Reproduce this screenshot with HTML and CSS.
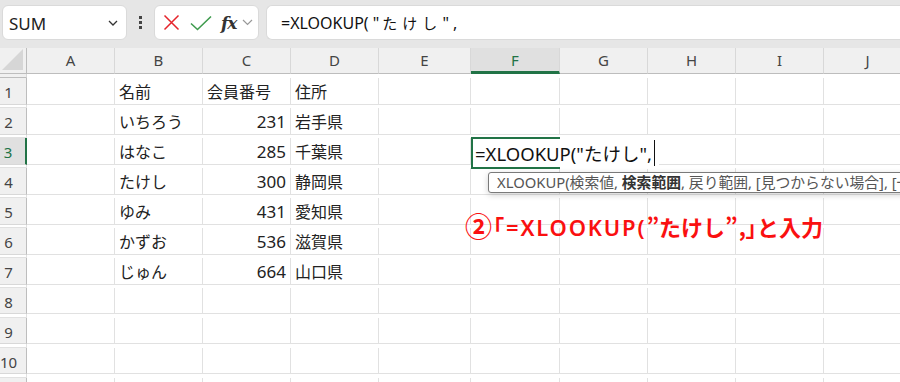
FILE: index.html
```html
<!DOCTYPE html>
<html lang="ja">
<head>
<meta charset="utf-8">
<link rel="stylesheet" href="styles.css">
</head>
<body>
<div class="app">
  <div class="toolbar">
    <div class="namebox">
      <span class="name">SUM</span>
      <svg class="chev" width="10" height="6" viewBox="0 0 10 6"><path d="M1 1 L5 5 L9 1" fill="none" stroke="#333" stroke-width="1.3"/></svg>
    </div>
    <div class="dots"><i></i><i></i><i></i></div>
    <div class="fxbox">
      <svg class="ic" width="17" height="17" viewBox="0 0 17 17"><path d="M1.5 1.5 L15.5 15.5 M15.5 1.5 L1.5 15.5" stroke="#e5242b" stroke-width="1.5" fill="none"/></svg>
      <svg class="ic" width="22" height="16" viewBox="0 0 22 16"><path d="M1 8.5 L7.5 14.5 L21 1.5" stroke="#3f9b4e" stroke-width="1.6" fill="none"/></svg>
      <span class="fx">fx</span>
      <svg class="chev2" width="11" height="7" viewBox="0 0 11 7"><path d="M1 1 L5.5 5.5 L10 1" fill="none" stroke="#999" stroke-width="1.2"/></svg>
    </div>
    <div class="formula">=XLOOKUP( "<span class="kana">たけし</span>" ,</div>
  </div>
  <div class="sheet">
    <div class="row head">
      <div class="rh corner"><span class="tri"></span></div>
      <div class="ch">A</div><div class="ch">B</div><div class="ch">C</div><div class="ch">D</div><div class="ch">E</div><div class="ch sel">F</div><div class="ch">G</div><div class="ch">H</div><div class="ch">I</div><div class="ch">J</div><div class="ch"></div>
    </div>
    <div class="row">
      <div class="rh">1</div><div class="c"></div><div class="c">名前</div><div class="c">会員番号</div><div class="c">住所</div><div class="c"></div><div class="c"></div><div class="c"></div><div class="c"></div><div class="c"></div><div class="c"></div><div class="c"></div>
    </div>
    <div class="row">
      <div class="rh">2</div><div class="c"></div><div class="c">いちろう</div><div class="c num">231</div><div class="c">岩手県</div><div class="c"></div><div class="c"></div><div class="c"></div><div class="c"></div><div class="c"></div><div class="c"></div><div class="c"></div>
    </div>
    <div class="row">
      <div class="rh selr">3</div><div class="c"></div><div class="c">はなこ</div><div class="c num">285</div><div class="c">千葉県</div><div class="c"></div><div class="c"></div><div class="c"></div><div class="c"></div><div class="c"></div><div class="c"></div><div class="c"></div>
    </div>
    <div class="row">
      <div class="rh">4</div><div class="c"></div><div class="c">たけし</div><div class="c num">300</div><div class="c">静岡県</div><div class="c"></div><div class="c"></div><div class="c"></div><div class="c"></div><div class="c"></div><div class="c"></div><div class="c"></div>
    </div>
    <div class="row">
      <div class="rh">5</div><div class="c"></div><div class="c">ゆみ</div><div class="c num">431</div><div class="c">愛知県</div><div class="c"></div><div class="c"></div><div class="c"></div><div class="c"></div><div class="c"></div><div class="c"></div><div class="c"></div>
    </div>
    <div class="row">
      <div class="rh">6</div><div class="c"></div><div class="c">かずお</div><div class="c num">536</div><div class="c">滋賀県</div><div class="c"></div><div class="c"></div><div class="c"></div><div class="c"></div><div class="c"></div><div class="c"></div><div class="c"></div>
    </div>
    <div class="row">
      <div class="rh">7</div><div class="c"></div><div class="c">じゅん</div><div class="c num">664</div><div class="c">山口県</div><div class="c"></div><div class="c"></div><div class="c"></div><div class="c"></div><div class="c"></div><div class="c"></div><div class="c"></div>
    </div>
    <div class="row">
      <div class="rh">8</div><div class="c"></div><div class="c"></div><div class="c"></div><div class="c"></div><div class="c"></div><div class="c"></div><div class="c"></div><div class="c"></div><div class="c"></div><div class="c"></div><div class="c"></div>
    </div>
    <div class="row">
      <div class="rh">9</div><div class="c"></div><div class="c"></div><div class="c"></div><div class="c"></div><div class="c"></div><div class="c"></div><div class="c"></div><div class="c"></div><div class="c"></div><div class="c"></div><div class="c"></div>
    </div>
    <div class="row">
      <div class="rh">10</div><div class="c"></div><div class="c"></div><div class="c"></div><div class="c"></div><div class="c"></div><div class="c"></div><div class="c"></div><div class="c"></div><div class="c"></div><div class="c"></div><div class="c"></div>
    </div>
    <div class="row">
      <div class="rh"></div><div class="c"></div><div class="c"></div><div class="c"></div><div class="c"></div><div class="c"></div><div class="c"></div><div class="c"></div><div class="c"></div><div class="c"></div><div class="c"></div><div class="c"></div>
    </div>

    <div class="editcell">=XLOOKUP("たけし",<span class="caret"></span></div>
    <div class="tip">XLOOKUP(検索値, <b>検索範囲</b>, 戻り範囲, [見つからない場合], [一致モード])</div>
    <div class="note"><span class="circ">②</span><span class="br">「</span><span class="lat">=XLOOKUP(</span><span class="q">”</span>たけし<span class="q">”</span><span class="br">,」</span>と入力</div>
  </div>
</div>
</body>
</html>
```

FILE: styles.css
```css
html, body {
  margin: 0;
  padding: 0;
}
body {
  width: 900px;
  height: 382px;
  overflow: hidden;
  background: #ffffff;
  font-family: "Noto Sans CJK JP", "Noto Sans", sans-serif;
  color: #222;
}
.app {
  width: 900px;
  height: 382px;
  overflow: hidden;
}
.toolbar {
  height: 48px;
  box-sizing: border-box;
  padding: 5px 0 8px 2px;
  background: #e6e6e6;
  display: flex;
  align-items: stretch;
}
.namebox {
  width: 125px;
  background: #fff;
  border-radius: 6px;
  box-sizing: border-box;
  border: 1px solid #dadada;
  display: flex;
  align-items: center;
  padding: 0 6px 0 6px;
}
.name {
  flex: 1;
  font-family: "Noto Sans", "Noto Sans CJK JP", sans-serif;
  font-size: 17px;
  color: #222;
  padding-top: 1px;
}
.chev { margin-right: 2px; }
.dots {
  width: 27px;
  display: flex;
  flex-direction: column;
  align-items: center;
  justify-content: center;
  gap: 2px;
}
.dots i {
  display: block;
  width: 3px;
  height: 3px;
  background: #444;
}
.fxbox {
  width: 105px;
  background: #fff;
  border-radius: 6px;
  box-sizing: border-box;
  border: 1px solid #dadada;
  display: flex;
  align-items: center;
  padding-left: 8px;
}
.fxbox .ic { flex: none; }
.fxbox .ic + .ic { margin-left: 10px; }
.fx {
  font-family: "DejaVu Serif", "Liberation Serif", serif;
  font-style: italic;
  font-weight: bold;
  font-size: 17px;
  color: #333;
  margin-left: 9px;
  letter-spacing: -1px;
}
.chev2 { margin-left: 6px; }
.formula {
  flex: 1;
  margin-left: 7px;
  background: #fff;
  border-radius: 6px 0 0 6px;
  border: 1px solid #dadada;
  border-right: none;
  display: flex;
  align-items: center;
  padding-left: 14px;
  font-family: "Noto Sans", "Noto Sans CJK JP", sans-serif;
  font-size: 16px;
  color: #111;
  white-space: pre;
}
.kana {
  font-family: "Noto Sans CJK JP", sans-serif;
  font-size: 15px;
  letter-spacing: 5px;
  margin-left: 3px;
}
.sheet {
  position: relative;
}
.row {
  display: grid;
  grid-template-columns: 27px 88px 88px 88px 88px 92px 89px 88px 88px 88px 88px;
  height: 30px;
}
.rh {
  background: #f0f0f0;
  border-right: 1px solid #bdbdbd;
  border-bottom: 1px solid #d8d8d8;
  box-sizing: border-box;
  font-family: "Noto Sans", sans-serif;
  font-size: 15px;
  color: #444;
  display: flex;
  align-items: center;
  justify-content: center;
  padding-right: 9px;
  padding-top: 2px;
}
.rh.selr {
  background: #e0e0e0;
  border-right: 2px solid #217346;
  color: #217346;
}
.head {
  height: 30px;
}
.head .rh {
  border-bottom: 1px solid #bdbdbd;
  position: relative;
}
.tri {
  position: absolute;
  right: 3px;
  bottom: 3px;
  width: 21px;
  height: 21px;
  background: #d6d6d6;
  clip-path: polygon(100% 0, 100% 100%, 0 100%);
}
.ch {
  background: #f0f0f0;
  border-right: 1px solid #d8d8d8;
  border-bottom: 1px solid #bdbdbd;
  box-sizing: border-box;
  font-family: "Noto Sans", sans-serif;
  font-size: 15px;
  color: #444;
  display: flex;
  justify-content: center;
  padding-top: 2px;
}
.ch.sel {
  background: #e0e0e0;
  border-bottom: 3px solid #217346;
  color: #217346;
}
.c {
  border-right: 1px solid #e1e1e1;
  border-bottom: 1px solid #e1e1e1;
  box-sizing: border-box;
  font-size: 16px;
  color: #222;
  padding-left: 4px;
  display: flex;
  align-items: center;
  white-space: nowrap;
  overflow: hidden;
}
.c.num {
  justify-content: flex-end;
  padding-left: 0;
  padding-right: 4px;
  font-family: "Noto Sans", "Noto Sans CJK JP", sans-serif;
  font-size: 17px;
}
.editcell {
  position: absolute;
  left: 471px;
  top: 89px;
  width: 188px;
  height: 32px;
  box-sizing: border-box;
  background: #fff;
  display: flex;
  align-items: center;
  padding-left: 4px;
  font-family: "Noto Sans", "Noto Sans CJK JP", sans-serif;
  font-size: 18.5px;
  color: #111;
  white-space: pre;
}
.editcell::before {
  content: "";
  position: absolute;
  left: 0;
  top: 0;
  width: 89px;
  height: 32px;
  box-sizing: border-box;
  border: 2px solid #217346;
  border-right: none;
}
.caret {
  position: absolute;
  left: 183px;
  top: 3px;
  width: 1px;
  height: 26px;
  background: #111;
}
.tip {
  position: absolute;
  left: 488px;
  top: 124px;
  height: 21px;
  box-sizing: border-box;
  padding: 0 8px;
  background: #fff;
  border: 1px solid #7a7a7a;
  border-radius: 3px;
  box-shadow: 0 2px 6px rgba(0,0,0,0.18);
  font-family: "Noto Sans", "Noto Sans CJK JP", sans-serif;
  font-size: 14.8px;
  line-height: 19px;
  color: #555;
  white-space: nowrap;
}
.tip b {
  color: #333;
}
.note {
  position: absolute;
  left: 465px;
  top: 163px;
  font-family: "Noto Sans CJK JP", sans-serif;
  font-weight: bold;
  font-size: 22px;
  line-height: 30px;
  color: #fa1010;
  white-space: nowrap;
}
.circ {
  font-size: 27px;
  vertical-align: -1px;
}
.br {
  font-feature-settings: "palt";
  margin-left: 1px;
}
.q {
  font-feature-settings: "palt";
}
.lat {
  font-family: "Noto Sans", "Noto Sans CJK JP", sans-serif;
  font-weight: 600;
  letter-spacing: 1.8px;
  margin-left: 2px;
}
```
